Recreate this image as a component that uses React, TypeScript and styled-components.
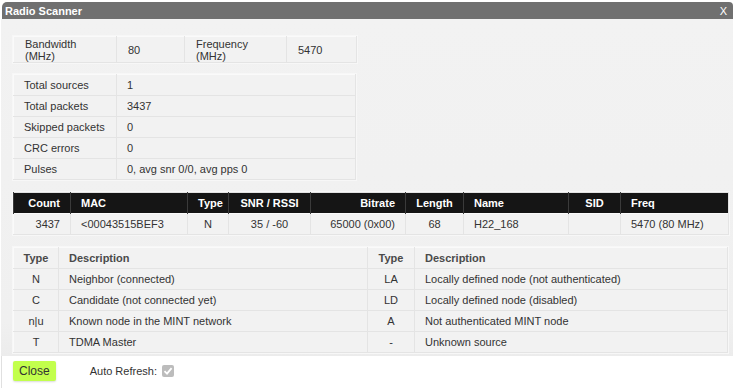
import React from "react";
import styled, { createGlobalStyle } from "styled-components";

const GlobalStyle = createGlobalStyle`
  html, body {
    margin: 0;
    padding: 0;
    background: #ffffff;
    font-family: "Liberation Sans", Arial, sans-serif;
    font-size: 11px;
    color: #333;
  }
`;

const summary = [
  ["Total sources", "1"],
  ["Total packets", "3437"],
  ["Skipped packets", "0"],
  ["CRC errors", "0"],
  ["Pulses", "0, avg snr 0/0, avg pps 0"],
];

type Align = "left" | "center" | "right";

const scanCols: { label: string; width: number; align: Align }[] = [
  { label: "Count", width: 57, align: "right" },
  { label: "MAC", width: 117, align: "left" },
  { label: "Type", width: 41, align: "center" },
  { label: "SNR / RSSI", width: 82, align: "center" },
  { label: "Bitrate", width: 95, align: "right" },
  { label: "Length", width: 58, align: "center" },
  { label: "Name", width: 105, align: "left" },
  { label: "SID", width: 52, align: "center" },
  { label: "Freq", width: 108, align: "left" },
];

const scanRow = ["3437", "<00043515BEF3", "N", "35 / -60", "65000 (0x00)", "68", "H22_168", "", "5470 (80 MHz)"];

const legend = [
  ["N", "Neighbor (connected)", "LA", "Locally defined node (not authenticated)"],
  ["C", "Candidate (not connected yet)", "LD", "Locally defined node (disabled)"],
  ["n|u", "Known node in the MINT network", "A", "Not authenticated MINT node"],
  ["T", "TDMA Master", "-", "Unknown source"],
];

export default function App() {
  return (
    <>
      <GlobalStyle />
      <Dialog>
        <TitleBar>
          <Title>Radio Scanner</Title>
          <CloseX>X</CloseX>
        </TitleBar>
        <Content>
          <InfoTable $width={343}>
            <colgroup>
              <col style={{ width: 103 }} />
              <col style={{ width: 68 }} />
              <col style={{ width: 102 }} />
              <col style={{ width: 70 }} />
            </colgroup>
            <tbody>
              <tr>
                <Cell $pad={11} $height={25}>Bandwidth<br />(MHz)</Cell>
                <Cell $pad={11} $height={25}>80</Cell>
                <Cell $pad={11} $height={25}>Frequency<br />(MHz)</Cell>
                <Cell $pad={11} $height={25}>5470</Cell>
              </tr>
            </tbody>
          </InfoTable>

          <InfoTable $width={343}>
            <colgroup>
              <col style={{ width: 103 }} />
              <col />
            </colgroup>
            <tbody>
              {summary.map(([k, v]) => (
                <tr key={k}>
                  <Cell $pad={10}>{k}</Cell>
                  <Cell $pad={10}>{v}</Cell>
                </tr>
              ))}
            </tbody>
          </InfoTable>

          <InfoTable $width={715} $spaced>
            <colgroup>
              {scanCols.map((c) => (
                <col key={c.label} style={{ width: c.width }} />
              ))}
            </colgroup>
            <thead>
              <tr>
                {scanCols.map((c) => (
                  <HeadCell key={c.label} $align={c.align}>{c.label}</HeadCell>
                ))}
              </tr>
            </thead>
            <tbody>
              <tr>
                {scanRow.map((v, i) => (
                  <Cell key={i} $pad={10} $align={scanCols[i].align}>{v}</Cell>
                ))}
              </tr>
            </tbody>
          </InfoTable>

          <InfoTable $width={715} $spaced>
            <colgroup>
              <col style={{ width: 45 }} />
              <col style={{ width: 309 }} />
              <col style={{ width: 47 }} />
              <col />
            </colgroup>
            <tbody>
              <tr>
                <Cell $align="center" $strong>Type</Cell>
                <Cell $pad={10} $strong>Description</Cell>
                <Cell $align="center" $strong>Type</Cell>
                <Cell $pad={10} $strong>Description</Cell>
              </tr>
              {legend.map((r) => (
                <tr key={r[0]}>
                  <Cell $align="center">{r[0]}</Cell>
                  <Cell $pad={10}>{r[1]}</Cell>
                  <Cell $align="center">{r[2]}</Cell>
                  <Cell $pad={10}>{r[3]}</Cell>
                </tr>
              ))}
            </tbody>
          </InfoTable>
        </Content>
        <Footer>
          <CloseButton>Close</CloseButton>
          <RefreshLabel>
            Auto Refresh:
            <CheckBox>
              <svg width="10" height="10" viewBox="0 0 10 10">
                <path d="M1.5 5.2 L4 7.6 L8.6 2.2" fill="none" stroke="#ffffff" strokeWidth="1.8" />
              </svg>
            </CheckBox>
          </RefreshLabel>
        </Footer>
      </Dialog>
    </>
  );
}

const Dialog = styled.div`
  width: 732px;
  height: 388px;
  margin-left: 1px;
  padding-top: 2px;
  box-sizing: border-box;
  display: flex;
  flex-direction: column;
  background: #ffffff;
`;

const TitleBar = styled.div`
  height: 17px;
  margin-left: 1px;
  background: #707070;
  border-radius: 5px 4px 0 0;
  display: flex;
  align-items: center;
  justify-content: space-between;
  padding: 0 6px 0 3px;
`;

const Title = styled.span`
  color: #ffffff;
  font-weight: bold;
  font-size: 11px;
`;

const CloseX = styled.span`
  color: #ffffff;
  font-size: 11px;
`;

const Content = styled.div`
  background: linear-gradient(#f2f2f2, #f0f0f0 90%, #ececec);
  padding: 17px 5px 3px 12px;
  display: flex;
  flex-direction: column;
  gap: 11px;
`;

const InfoTable = styled.table<{ $width: number; $spaced?: boolean }>`
  width: ${(p) => p.$width}px;
  margin-top: ${(p) => (p.$spaced ? 1 : 0)}px;
  border-collapse: collapse;
  table-layout: fixed;
  background: #f2f2f2;
  border: 1px solid #e2e2e2;
  box-shadow: 0 0 0 1px #f7f7f7;
`;

const Cell = styled.td<{ $pad?: number; $align?: Align; $strong?: boolean; $height?: number }>`
  height: ${(p) => p.$height ?? 20}px;
  padding: 0 ${(p) => p.$pad ?? 4}px;
  text-align: ${(p) => p.$align ?? "left"};
  font-weight: ${(p) => (p.$strong ? "bold" : "normal")};
  color: ${(p) => (p.$strong ? "#4a4a4a" : "#333")};
  line-height: 12px;
  border: 1px solid #e4e4e4;
  border-top-color: #fafafa;
  border-left-color: #fafafa;
  white-space: nowrap;
  overflow: hidden;
`;

const HeadCell = styled.th<{ $align: Align }>`
  height: 20px;
  padding: 0 10px;
  background: #151515;
  color: #ffffff;
  font-weight: bold;
  text-align: ${(p) => p.$align};
  border-left: 1px solid #3a3a3a;
`;

const Footer = styled.div`
  flex: 1;
  display: flex;
  align-items: center;
  padding: 0 0 2px 11px;
  gap: 34px;
  border-left: 1px solid #e0e0e0;
`;

const CloseButton = styled.button`
  background: #c2ff4c;
  border: none;
  border-radius: 2px;
  height: 20px;
  padding: 0 6px;
  font-family: "Liberation Sans", Arial, sans-serif;
  font-size: 12px;
  color: #333;
  box-shadow: 0 1px 2px rgba(0, 0, 0, 0.15);
`;

const RefreshLabel = styled.label`
  display: flex;
  align-items: center;
  gap: 5px;
  font-size: 11px;
  color: #333;
`;

const CheckBox = styled.span`
  width: 12px;
  height: 12px;
  border-radius: 2px;
  background: #bcbcbc;
  display: flex;
  align-items: center;
  justify-content: center;
`;
